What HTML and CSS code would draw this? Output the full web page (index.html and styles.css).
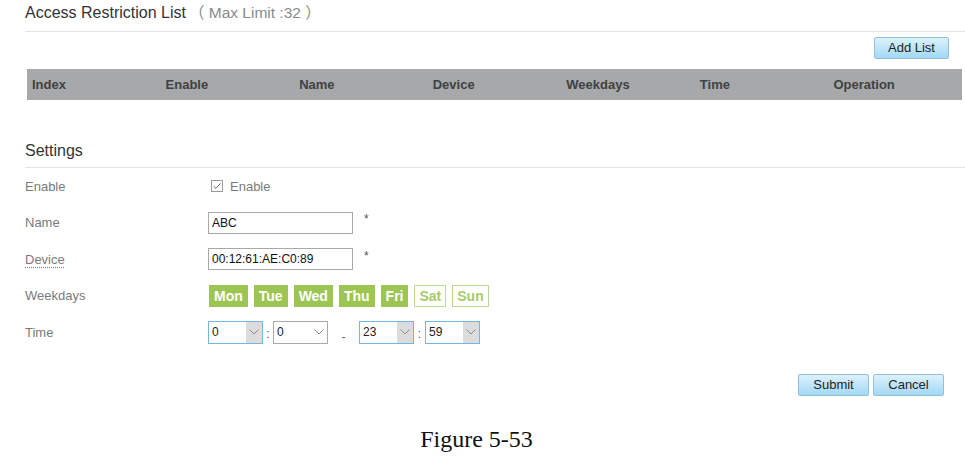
FILE: index.html
```html
<!DOCTYPE html>
<html lang="en">
<head>
<meta charset="utf-8">
<title>Access Restriction List</title>
<link rel="stylesheet" href="styles.css">
</head>
<body>
<div class="page">
  <div class="sec-head">
    <span class="sec-title">Access Restriction List</span>
    <span class="limit">（ Max Limit :32 ）</span>
  </div>
  <div class="toolbar"><button class="btn add">Add List</button></div>
  <table class="list">
    <thead>
      <tr><th>Index</th><th>Enable</th><th>Name</th><th>Device</th><th>Weekdays</th><th>Time</th><th>Operation</th></tr>
    </thead>
  </table>

  <div class="sec-head settings">
    <span class="sec-title">Settings</span>
  </div>
  <div class="form">
    <div class="row">
      <div class="label">Enable</div>
      <div class="ctrl">
        <span class="cb"><svg width="12" height="12" viewBox="0 0 12 12"><rect x="0.5" y="0.5" width="11" height="11" fill="#fff" stroke="#9a9a9a"/><path d="M2.6 6.2 L4.9 8.4 L9.4 3.4" fill="none" stroke="#6a6a6a" stroke-width="1"/></svg></span>
        <span class="cb-text">Enable</span>
      </div>
    </div>
    <div class="row">
      <div class="label">Name</div>
      <div class="ctrl"><div class="field">ABC</div><span class="req">*</span></div>
    </div>
    <div class="row">
      <div class="label"><span class="dotted">Device</span></div>
      <div class="ctrl"><div class="field">00:12:61:AE:C0:89</div><span class="req">*</span></div>
    </div>
    <div class="row">
      <div class="label">Weekdays</div>
      <div class="ctrl days">
        <span class="day">Mon</span><span class="day">Tue</span><span class="day">Wed</span><span class="day">Thu</span><span class="day">Fri</span><span class="day off">Sat</span><span class="day off">Sun</span>
      </div>
    </div>
    <div class="row">
      <div class="label">Time</div>
      <div class="ctrl time">
        <div class="sel"><span class="v">0</span><span class="arr"><svg width="10" height="6" viewBox="0 0 10 6"><path d="M0.5 0.5 L5 5 L9.5 0.5" fill="none" stroke="#8a8a8a" stroke-width="1"/></svg></span></div>
        <span class="colon">:</span>
        <div class="sel plain"><span class="v">0</span><span class="arr"><svg width="10" height="6" viewBox="0 0 10 6"><path d="M0.5 0.5 L5 5 L9.5 0.5" fill="none" stroke="#8a8a8a" stroke-width="1"/></svg></span></div>
        <span class="dash">-</span>
        <div class="sel"><span class="v">23</span><span class="arr"><svg width="10" height="6" viewBox="0 0 10 6"><path d="M0.5 0.5 L5 5 L9.5 0.5" fill="none" stroke="#8a8a8a" stroke-width="1"/></svg></span></div>
        <span class="colon wide">:</span>
        <div class="sel"><span class="v">59</span><span class="arr"><svg width="10" height="6" viewBox="0 0 10 6"><path d="M0.5 0.5 L5 5 L9.5 0.5" fill="none" stroke="#8a8a8a" stroke-width="1"/></svg></span></div>
      </div>
    </div>
  </div>

  <div class="actions">
    <button class="btn act">Submit</button>
    <button class="btn act">Cancel</button>
  </div>

  <div class="caption">Figure 5-53</div>
</div>
</body>
</html>
```

FILE: styles.css
```css
html, body {
  margin: 0;
  padding: 0;
  background: #fff;
}
body {
  font-family: "Liberation Sans", Arial, sans-serif;
  color: #333;
}
.page {
  width: 965px;
}

/* section headings */
.sec-head {
  box-sizing: border-box;
  height: 32px;
  margin-left: 25px;
  padding: 3px 0 8px;
  line-height: 20px;
  border-bottom: 1px solid #e3e3e3;
  display: flex;
  align-items: baseline;
  white-space: nowrap;
}
.sec-title {
  font-size: 16px;
  color: #333;
}
.limit {
  margin-left: 3px;
  font-family: "Liberation Sans", "Noto Sans CJK SC", sans-serif;
  font-size: 15.5px;
  color: #8a8a8a;
}
.settings {
  margin-top: 36px;
  padding: 5px 0 6px;
}

/* buttons */
.btn {
  box-sizing: border-box;
  height: 22px;
  padding: 0;
  border: 1px solid #93bfdc;
  border-radius: 2px;
  background: linear-gradient(#dcf2fd, #a2d8f5);
  font-family: "Liberation Sans", Arial, sans-serif;
  font-size: 13px;
  color: #1e1e1e;
  line-height: 20px;
}
.toolbar {
  display: flex;
  justify-content: flex-end;
  padding: 5px 16px 0 0;
  margin-bottom: 10px;
}
.add {
  width: 75px;
}

/* list table */
.list {
  margin-left: 27px;
  width: 935px;
  border-collapse: collapse;
  table-layout: fixed;
  background: #a7a8aa;
}
.list th {
  height: 31px;
  padding: 0 0 0 5px;
  text-align: left;
  font-size: 13px;
  font-weight: bold;
  color: #414141;
}

/* form */
.form {
  padding-left: 25px;
}
.row {
  display: flex;
  align-items: center;
  height: 36.5px;
}
.label {
  width: 183px;
  font-size: 13px;
  color: #7a7a7a;
}
.dotted {
  text-decoration: underline dotted #8a8a8a;
  text-underline-offset: 3px;
}
.ctrl {
  display: flex;
  align-items: center;
}
.cb {
  display: flex;
  margin-left: 3px;
}
.cb-text {
  margin-left: 7px;
  font-size: 13px;
  color: #7a7a7a;
}
.field {
  box-sizing: border-box;
  width: 145px;
  height: 22px;
  padding-left: 3px;
  border: 1px solid #a9a9a9;
  font-size: 12px;
  line-height: 20px;
  color: #111;
}
.req {
  margin-left: 11px;
  margin-bottom: 7px;
  font-size: 12px;
  color: #555;
}

/* weekdays */
.days {
  gap: 6px;
  margin-left: 1px;
}
.day {
  box-sizing: border-box;
  height: 22px;
  padding: 0 4px;
  border: 1px solid #9cc553;
  background: #9cc553;
  color: #fff;
  font-size: 14px;
  font-weight: bold;
  line-height: 20px;
}
.day.off {
  background: #fff;
  border-color: #bcd993;
  color: #a6cb6c;
}

/* time selectors */
.sel {
  box-sizing: border-box;
  width: 55px;
  height: 23px;
  border: 1px solid #72b7e2;
  display: flex;
}
.sel .v {
  flex: 1;
  padding-left: 3px;
  font-size: 12px;
  line-height: 21px;
  color: #222;
}
.sel .arr {
  width: 16px;
  background: #dcdcdc;
  display: flex;
  align-items: center;
  justify-content: center;
}
.sel.plain {
  border-color: #a9a9a9;
}
.sel.plain .arr {
  background: #fff;
}
.colon {
  width: 10px;
  text-align: center;
  font-size: 12px;
  color: #555;
  padding-top: 4px;
}
.colon.wide {
  width: 11px;
}
.dash {
  width: 31px;
  text-align: center;
  font-size: 12px;
  color: #666;
  padding-top: 9px;
}

/* actions */
.actions {
  display: flex;
  justify-content: flex-end;
  gap: 4px;
  padding-right: 21px;
  margin-top: 23.5px;
}
.act {
  width: 71px;
}

/* caption */
.caption {
  margin-top: 29px;
  padding-right: 12px;
  text-align: center;
  font-family: "Liberation Serif", "Times New Roman", serif;
  font-size: 24px;
  line-height: 28px;
  color: #111;
}
```
